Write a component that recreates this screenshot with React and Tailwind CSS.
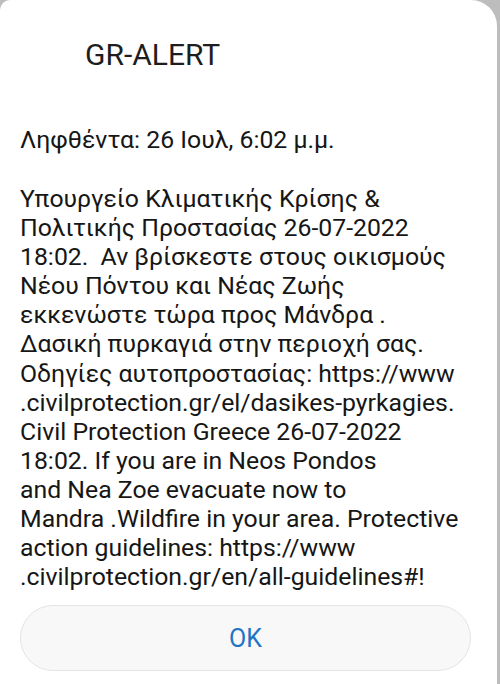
import React from 'react';

const lines = [
  'Υπουργείο Κλιματικής Κρίσης &',
  'Πολιτικής Προστασίας 26-07-2022',
  '18:02.  Αν βρίσκεστε στους οικισμούς',
  'Νέου Πόντου και Νέας Ζωής',
  'εκκενώστε τώρα προς Μάνδρα .',
  'Δασική πυρκαγιά στην περιοχή σας.',
  'Οδηγίες αυτοπροστασίας: https://www',
  '.civilprotection.gr/el/dasikes-pyrkagies.',
  'Civil Protection Greece 26-07-2022',
  '18:02. If you are in Neos Pondos',
  'and Nea Zoe evacuate now to',
  'Mandra .Wildfire in your area. Protective',
  'action guidelines: https://www',
  '.civilprotection.gr/en/all-guidelines#!',
];

function App() {
  return (
    <div className="w-[500px] h-[684px] overflow-hidden bg-[#bdbdbd] font-['Roboto',sans-serif] text-[#161616]">
      <div className="mr-[3px] h-full bg-white rounded-tr-[26px] rounded-tl-[10px] px-5 pt-[36px]">
        <div className="pl-[65px] text-[30px] leading-[38px] text-[#1e1e1e]">GR-ALERT</div>

        <div className="mt-[51px] text-[24.8px] leading-[29px] whitespace-pre">Ληφθέντα: 26 Ιουλ, 6:02 μ.μ.</div>

        <div className="mt-[30px] text-[24.8px] leading-[29.1px] whitespace-pre">
          {lines.map((l, i) => (
            <div key={i}>{l}</div>
          ))}
        </div>

        <button className="mt-[14px] w-[451px] h-[66px] rounded-full bg-[#f8f8f8] border border-[#e4e4e4] text-[25px] text-[#1f74c4] flex items-center justify-center">
          OK
        </button>
      </div>
    </div>
  );
}

export default App;
